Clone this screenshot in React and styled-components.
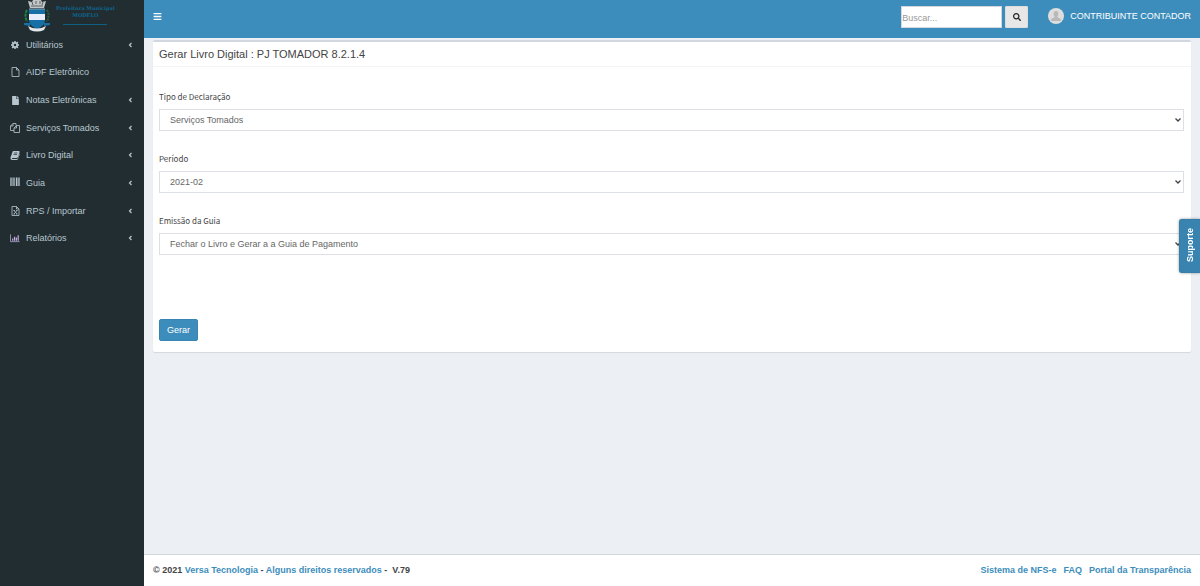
import React from 'react';
import styled, { createGlobalStyle } from 'styled-components';
import { FaBars, FaFile, FaSearch } from 'react-icons/fa';

const GlobalStyle = createGlobalStyle`
* {
  box-sizing: border-box;
}

body {
  margin: 0;
  background: #ecf0f5;
  color: #333;
  font-family: 'Liberation Sans', Arial, sans-serif;
  font-size: 9px;
  line-height: 12px;
}

a {
  color: #3c8dbc;
  text-decoration: none;
}

button, input, select {
  font-family: inherit;
  font-size: 9px;
}
`;

const Page = styled.div`
display: flex;
min-height: 100vh;
`;

const Sidebar = styled.aside`
flex: 0 0 144px;
background: #222d32;
`;

const Logo = styled.a`
display: flex;
height: 31px;
padding-left: 22px;
`;

const Brand = styled.span`
display: flex;
flex-direction: column;
align-items: center;
padding-top: 5px;
margin-left: 4px;
color: #0d6690;
font-family: 'DejaVu Serif', serif;
font-size: 5px;
font-weight: bold;
line-height: 7px;
white-space: nowrap;
`;

const BrandLine = styled.span`
width: 44px;
height: 1px;
margin-top: 5px;
background: #0d6084;
`;

const Menu = styled.ul`
display: flex;
flex-direction: column;
min-height: 221px;
margin: 0;
padding: 0;
list-style: none;
`;

const MenuItem = styled.li`
display: flex;
flex: 1;
`;

const MenuLink = styled.a`
display: flex;
flex: 1;
align-items: center;
padding: 0 12px 0 10px;
color: #b8c7ce;
`;

const MenuIcon = styled.span`
display: flex;
justify-content: center;
width: 10px;
margin-right: 6px;
`;

const MenuText = styled.span`
flex: 1;
`;

const Main = styled.div`
display: flex;
flex: 1;
flex-direction: column;
min-width: 0;
`;

const Navbar = styled.header`
display: flex;
align-items: flex-start;
justify-content: space-between;
height: 38px;
padding: 6px 9px 0;
background: #3c8dbc;
color: white;
`;

const Toggle = styled.button`
display: flex;
align-items: center;
height: 20px;
padding: 0;
border: 0;
background: none;
color: white;
`;

const NavRight = styled.div`
display: flex;
align-items: flex-start;
`;

const Search = styled.form`
display: flex;
gap: 3px;
margin-right: 20px;
`;

const SearchInput = styled.input`
width: 101px;
height: 22px;
padding: 2px 0 0;
border: 1px solid #d2d6de;
background: white;
color: #555;

&::placeholder {
  color: #999;
}
`;

const SearchButton = styled.button`
display: flex;
align-items: center;
justify-content: center;
width: 23px;
height: 22px;
padding: 0;
border: 1px solid #ddd;
border-radius: 1px;
background: #e7e7e7;
color: #222;
`;

const User = styled.a`
display: flex;
align-items: center;
gap: 6px;
height: 20px;
color: white;
white-space: nowrap;
`;

const Content = styled.main`
flex: 1;
padding: 2px 9px 16px;
`;

const Box = styled.section`
border-top: 2px solid #d2d6de;
border-radius: 2px;
background: white;
box-shadow: 0 1px 1px rgba(0, 0, 0, 0.1);
`;

const BoxTitle = styled.h1`
margin: 0;
padding: 4px 6px;
border-bottom: 1px solid #f4f4f4;
color: #444;
font-size: 11px;
font-weight: normal;
line-height: 16px;
`;

const BoxBody = styled.form`
display: flex;
flex-direction: column;
align-items: flex-start;
gap: 22px;
padding: 24px 7px 11px 6px;
`;

const Field = styled.div`
display: flex;
flex-direction: column;
gap: 6px;
width: 100%;
`;

const Label = styled.label`
color: #444;
font-family: 'Noto Sans CJK SC', 'Noto Sans', sans-serif;
font-size: 8px;
line-height: 12px;
`;

const SelectWrap = styled.div`
display: grid;
align-items: center;

& > * {
  grid-area: 1 / 1;
}

& > svg {
  justify-self: end;
  margin-right: 3px;
  pointer-events: none;
}
`;

const Select = styled.select`
appearance: none;
width: 100%;
height: 22px;
padding: 0 10px;
border: 1px solid #dcdfe6;
border-radius: 0;
background: white;
color: #666;
`;

const SubmitButton = styled.button`
height: 22px;
margin-top: 42px;
padding: 0 7px;
border: 1px solid #3885b3;
border-radius: 2px;
background: #3c8dbc;
color: white;
`;

const Footer = styled.footer`
display: flex;
justify-content: space-between;
padding: 9px 9px 10px;
border-top: 1px solid #d2d6de;
background: white;
color: #444;
font-weight: bold;
`;

const FooterLinks = styled.nav`
display: flex;
gap: 7px;
`;

const Support = styled.button`
position: fixed;
top: 219px;
right: 0;
width: 21px;
height: 54px;
padding: 0;
border: 1px solid #367fa9;
border-right: 0;
border-radius: 3px 0 0 3px;
background: #3883b0;
box-shadow: 0 0 3px rgba(0, 0, 0, 0.4);
color: white;
font-weight: bold;
`;

const SupportText = styled.span`
display: inline-block;
writing-mode: vertical-rl;
transform: rotate(180deg);
`;

const Crest = () => (
  <svg width="30" height="32" viewBox="0 0 30 32" aria-hidden="true">
    <path d="M6 1l4 1 1-2h8l1 2 4-1-2 7H8z" fill="#c3c5c6" />
    <path d="M10 2l1 3M14 1v3M18 1v3M21 2l-1 3M9 6h12" fill="none" stroke="#596063" />
    <path d="M5 10c-2 3-2 7 0 12" fill="none" stroke="#168a49" strokeWidth="2" strokeDasharray="3 1" />
    <path d="M25 10c2 3 2 7 0 12" fill="none" stroke="#27613f" strokeWidth="2" strokeDasharray="2 1" />
    <path d="M2 23h6v3l-6-1zM28 23h-6v3l6-1z" fill="#176fa3" />
    <path d="M7 9h16v11q0 6-8 9-8-3-8-9z" fill="#1670a5" />
    <path d="M7 14h16v6H7z" fill="#e8edfb" />
    <path d="M7 9h16" stroke="#8ba8b8" />
    <path d="M6 26q9 5 18 0l-2 4q-7 3-14 0z" fill="#e3e8eb" />
  </svg>
);

const Gear = () => (
  <svg width="8" height="8" viewBox="0 0 16 16" fill="none" stroke="currentColor">
    <circle cx="8" cy="8" r="4.300" strokeWidth="3.600" />
    <path d="M8 0v3M8 13v3M0 8h3M13 8h3M2.300 2.300l2 2M11.700 11.700l2 2M2.300 13.700l2-2M11.700 4.300l2-2" strokeWidth="3" />
  </svg>
);

const FileOutline = () => (
  <svg width="9" height="10" viewBox="0 0 18 20" fill="none" stroke="currentColor" strokeWidth="1.6">
    <path d="M2 1h9l5 5v13H2zM11 1v5h5" />
  </svg>
);

const FilesOutline = () => (
  <svg width="10" height="10" viewBox="0 0 20 20" fill="none" stroke="currentColor" strokeWidth="1.6">
    <path d="M8 15H1V6l5-5h6v4M6 1v5H1M8 10l5-5h6v14H8zM13 5v5H8" />
  </svg>
);

const Book = () => (
  <svg width="10" height="10" viewBox="0 0 20 20">
    <path d="M7 2h11q2 0 1 3l-3 9q-1 2-3 2H4q-1 1 1 2h9q1 0 2-2l3-9q1 1 0 3l-3 8q-1 2-3 2H4q-4-1-3-5L5 4q0-2 2-2z" fill="currentColor" />
    <path d="M8 6h7M7 9h7" stroke="#222d32" strokeWidth="1.4" />
  </svg>
);

const Barcode = () => (
  <svg width="10" height="12" viewBox="0 0 20 24" fill="none" stroke="currentColor">
    <path d="M2 1v17M8 1v17M13 1v17M18 1v17" strokeWidth="2.600" />
    <path d="M5 1v17M15.500 1v17" strokeWidth="1" />
  </svg>
);

const FileExcel = () => (
  <svg width="9" height="10" viewBox="0 0 18 20" fill="none" stroke="currentColor" strokeWidth="1.6">
    <path d="M2 1h9l5 5v13H2zM11 1v5h5M6 9l6 7M12 9l-6 7M5 9h3M10 9h3M5 16h3M10 16h3" />
  </svg>
);

const BarChart = () => (
  <svg width="11" height="10" viewBox="0 0 22 20" fill="none" stroke="#c3b1dc">
    <path d="M1 2v16h20" strokeWidth="1.6" />
    <path d="M6 16v-5M10 16V7M14 16v-7M18 16V4" strokeWidth="2.6" />
  </svg>
);

const AngleLeft = () => (
  <svg width="4" height="6" viewBox="0 0 8 12" fill="none" stroke="currentColor" strokeWidth="2.400">
    <path d="M7 2L3 6l4 4" />
  </svg>
);

const SelectArrow = () => (
  <svg width="6" height="4" viewBox="0 0 12 8" fill="none" stroke="#444" strokeWidth="2.600">
    <path d="M1 1l5 5 5-5" />
  </svg>
);

const Avatar = () => (
  <svg width="16" height="16" viewBox="0 0 16 16" aria-hidden="true">
    <circle cx="8" cy="8" r="8" fill="#dedede" />
    <path d="M8 3c3 0 3 4 1 6 2 1 4 1 4 4H3c0-3 2-3 4-4-2-2-2-6 1-6z" fill="#b9b9b9" />
  </svg>
);

const menuItems = [
  { text: 'Utilitários', icon: <Gear />, tree: true },
  { text: 'AIDF Eletrônico', icon: <FileOutline /> },
  { text: 'Notas Eletrônicas', icon: <FaFile size={9} />, tree: true },
  { text: 'Serviços Tomados', icon: <FilesOutline />, tree: true },
  { text: 'Livro Digital', icon: <Book />, tree: true },
  { text: 'Guia', icon: <Barcode />, tree: true },
  { text: 'RPS / Importar', icon: <FileExcel />, tree: true },
  { text: 'Relatórios', icon: <BarChart />, tree: true },
];

const fields = [
  { id: 'tipo', label: 'Tipo de Declaração', value: 'Serviços Tomados' },
  { id: 'periodo', label: 'Período', value: '2021-02' },
  { id: 'emissao', label: 'Emissão da Guia', value: 'Fechar o Livro e Gerar a a Guia de Pagamento' },
];

const App = () => {
  return (
    <Page>
      <GlobalStyle />
      <Sidebar>
        <Logo href="#">
          <Crest />
          <Brand>
            <span>Prefeitura Municipal</span>
            <span>MODELO</span>
            <BrandLine />
          </Brand>
        </Logo>
        <Menu>
          {menuItems.map(item => (
            <MenuItem key={item.text}>
              <MenuLink href="#">
                <MenuIcon>{item.icon}</MenuIcon>
                <MenuText>{item.text}</MenuText>
                {item.tree && <AngleLeft />}
              </MenuLink>
            </MenuItem>
          ))}
        </Menu>
      </Sidebar>

      <Main>
        <Navbar>
          <Toggle type="button" aria-label="Menu"><FaBars size={9} /></Toggle>
          <NavRight>
            <Search>
              <SearchInput type="text" placeholder="Buscar..." aria-label="Buscar" />
              <SearchButton type="button" aria-label="Pesquisar"><FaSearch size={8} /></SearchButton>
            </Search>
            <User href="#">
              <Avatar />
              <span>CONTRIBUINTE CONTADOR</span>
            </User>
          </NavRight>
        </Navbar>

        <Content>
          <Box>
            <BoxTitle>Gerar Livro Digital : PJ TOMADOR 8.2.1.4</BoxTitle>
            <BoxBody>
              {fields.map(field => (
                <Field key={field.id}>
                  <Label htmlFor={field.id}>{field.label}</Label>
                  <SelectWrap>
                    <Select id={field.id}>
                      <option>{field.value}</option>
                    </Select>
                    <SelectArrow />
                  </SelectWrap>
                </Field>
              ))}
              <SubmitButton type="button">Gerar</SubmitButton>
            </BoxBody>
          </Box>
        </Content>

        <Footer>
          <div>
            © 2021 <a href="#">Versa Tecnologia</a> - <a href="#">Alguns direitos reservados</a> - &nbsp;V.79
          </div>
          <FooterLinks>
            <a href="#">Sistema de NFS-e</a>
            <a href="#">FAQ</a>
            <a href="#">Portal da Transparência</a>
          </FooterLinks>
        </Footer>
      </Main>

      <Support type="button"><SupportText>Suporte</SupportText></Support>
    </Page>
  );
};

export default App;
